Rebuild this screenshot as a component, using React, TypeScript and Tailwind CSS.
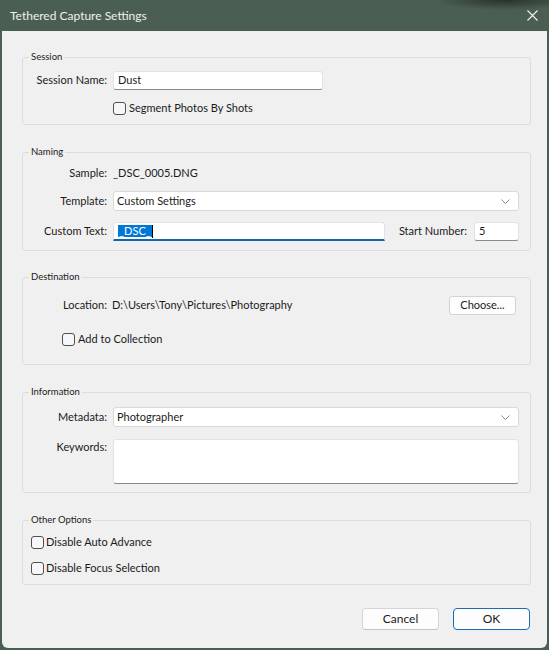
import React from "react";

function Checkbox() {
  return <span className="inline-block w-[13px] h-[13px] shrink-0 border border-[#505050] rounded-[3px] bg-[#f7f7f7]" />;
}

function Chevron() {
  return (
    <svg width="9" height="5" viewBox="0 0 9 5" className="shrink-0">
      <polyline points="0.5,0.5 4.5,4.5 8.5,0.5" fill="none" stroke="#7a7a7a" strokeWidth="0.9" />
    </svg>
  );
}

function Group({ title, className, children }: { title: string; className?: string; children: React.ReactNode }) {
  return (
    <div className={"relative w-[509px] border border-[#dcdcdc] rounded-[3px] " + (className || "")}>
      <span className="absolute left-[6px] -top-[8px] px-[2px] bg-[#f0f0f0] text-[9.5px] leading-[14px] text-[#1b1b1b]">
        {title}
      </span>
      {children}
    </div>
  );
}

function Label({ children }: { children: React.ReactNode }) {
  return <span className="w-[84px] shrink-0 text-right whitespace-nowrap">{children}</span>;
}

function Select({ value }: { value: string }) {
  return (
    <div className="ml-[6px] w-[406px] h-[20px] bg-white border border-[#d9d9d9] rounded-[3px] flex items-center justify-between pl-[3px] pr-[8px]">
      <span>{value}</span>
      <Chevron />
    </div>
  );
}

export default function App() {
  return (
    <div
      className="w-[549px] h-[650px] bg-[#4b5e52] flex flex-col text-[11px] text-[#1b1b1b]"
      style={{ fontFamily: "Lato, 'Noto Sans', sans-serif" }}
    >
      <div className="h-[31px] shrink-0 flex items-center justify-between pl-[10px] pr-[11px] bg-[radial-gradient(ellipse_70px_10px_at_505px_0px,#27312b,transparent)]">
        <span className="text-[12px] text-[#eef1ef]">Tethered Capture Settings</span>
        <svg width="11" height="11" viewBox="0 0 11 11">
          <path d="M0.5 0.5 L10.5 10.5 M10.5 0.5 L0.5 10.5" stroke="#f2f2f2" strokeWidth="1.1" />
        </svg>
      </div>
      <div className="flex-1 mx-[2px] mb-[2px] bg-[#f0f0f0] rounded-b-[6px] pt-[26px] pl-[20px]">
        <Group title="Session" className="pt-[13px] pb-[9px]">
          <div className="flex items-center h-[19px]">
            <Label>Session Name:</Label>
            <div className="ml-[6px] w-[210px] h-[19px] bg-white border border-[#e3e3e3] border-b-[#8a8a8a] rounded-[3px] flex items-center px-[4px]">
              Dust
            </div>
          </div>
          <div className="flex items-center h-[14px] mt-[11px] pl-[90px] gap-[3px]">
            <Checkbox />
            <span>Segment Photos By Shots</span>
          </div>
        </Group>

        <Group title="Naming" className="mt-[27px] pt-[10px] pb-[9px] pr-[11px]">
          <div className="flex items-center h-[20px]">
            <Label>Sample:</Label>
            <span className="ml-[6px]">_DSC_0005.DNG</span>
          </div>
          <div className="flex items-center mt-[8px]">
            <Label>Template:</Label>
            <Select value="Custom Settings" />
          </div>
          <div className="flex items-center h-[19px] mt-[11px]">
            <Label>Custom Text:</Label>
            <div className="ml-[6px] w-[272px] h-[19px] bg-white border border-[#e3e3e3] border-b-2 border-b-[#1465b0] rounded-t-[3px] flex items-center pl-[4px]">
              <span className="bg-[#0078d7] text-white leading-[12px] px-[1px]">_DSC_</span>
              <span className="w-px h-[13px] bg-black" />
            </div>
            <div className="flex-1" />
            <span className="whitespace-nowrap">Start Number:</span>
            <div className="ml-[7px] w-[45px] h-[19px] bg-white border border-[#e3e3e3] border-b-[#8a8a8a] rounded-[3px] flex items-center px-[4px]">
              5
            </div>
          </div>
        </Group>

        <Group title="Destination" className="mt-[26px] pt-[18px] pb-[18px] pr-[14px]">
          <div className="flex items-center h-[19px]">
            <Label>Location:</Label>
            <span className="ml-[5px]">D:\Users\Tony\Pictures\Photography</span>
            <div className="flex-1" />
            <div className="w-[67px] h-[19px] bg-[#fdfdfd] border border-[#d3d3d3] rounded-[3px] flex items-center justify-center">
              Choose...
            </div>
          </div>
          <div className="flex items-center h-[14px] mt-[17px] pl-[39px] gap-[3px]">
            <Checkbox />
            <span>Add to Collection</span>
          </div>
        </Group>

        <Group title="Information" className="mt-[27px] pt-[14px] pb-[8px]">
          <div className="flex items-center">
            <Label>Metadata:</Label>
            <Select value="Photographer" />
          </div>
          <div className="flex items-start mt-[12px]">
            <span className="w-[84px] shrink-0 text-right leading-[14px] mt-[1px]">Keywords:</span>
            <div className="ml-[6px] w-[406px] h-[45px] bg-white border border-[#e3e3e3] border-b-[#8a8a8a] rounded-[3px]" />
          </div>
        </Group>

        <Group title="Other Options" className="mt-[27px] pt-[14px] pb-[9px]">
          <div className="flex items-center h-[14px] pl-[8px] gap-[2px]">
            <Checkbox />
            <span>Disable Auto Advance</span>
          </div>
          <div className="flex items-center h-[14px] mt-[12px] pl-[8px] gap-[2px]">
            <Checkbox />
            <span>Disable Focus Selection</span>
          </div>
        </Group>

        <div className="w-[509px] mt-[23px] flex justify-end gap-[14px] pr-[1px]">
          <div className="w-[77px] h-[22px] bg-[#fdfdfd] border border-[#d5d5d5] border-b-[#c4c4c4] rounded-[4px] flex items-center justify-center text-[12px]">
            Cancel
          </div>
          <div className="w-[77px] h-[22px] bg-[#fdfdfd] border border-[#1a6cb8] rounded-[4px] flex items-center justify-center text-[12px]">
            OK
          </div>
        </div>
      </div>
    </div>
  );
}
